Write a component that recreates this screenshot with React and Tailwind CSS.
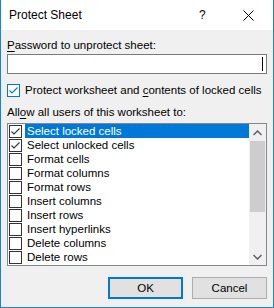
const items = [
  { label: 'Select locked cells', checked: true, selected: true },
  { label: 'Select unlocked cells', checked: true },
  { label: 'Format cells' },
  { label: 'Format columns' },
  { label: 'Format rows' },
  { label: 'Insert columns' },
  { label: 'Insert rows' },
  { label: 'Insert hyperlinks' },
  { label: 'Delete columns' },
  { label: 'Delete rows' },
];

function Check({ color }) {
  return (
    <svg width="11" height="11" viewBox="0 0 11 11" className="block">
      <polyline points="1.5,5.5 4,8 9.5,2.5" fill="none" stroke={color} strokeWidth="1.1" />
    </svg>
  );
}

export default function App() {
  return (
    <div
      className="w-[274px] h-[308px] flex flex-col bg-[#f0f0f0] border-x border-b border-[#1883d7] text-[11.5px] text-black leading-[15px] whitespace-nowrap"
      style={{ fontFamily: '"Liberation Sans", Arial, sans-serif' }}
    >
      {/* title bar */}
      <div className="h-[30px] bg-white flex items-center pl-[8px] text-[12px]">
        <span className="flex-1">Protect Sheet</span>
        <span className="w-[8px] mr-[36px]">?</span>
        <svg width="11" height="11" viewBox="0 0 11 11" className="mr-[19px]">
          <path d="M0.5 0.5 L10.5 10.5 M10.5 0.5 L0.5 10.5" stroke="#000" strokeWidth="1" />
        </svg>
      </div>

      <div className="flex flex-col px-[6px]">
        <div className="mt-[8px]">
          <span className="underline underline-offset-2">P</span>assword to unprotect sheet:
        </div>
        <div className="mt-[1px] h-[20px] bg-white border border-[#7a7a7a] flex items-center justify-end pr-[3px]">
          <div className="w-px h-[14px] bg-black" />
        </div>

        <div className="mt-[9px] flex items-center gap-[5px]">
          <div className="w-[13px] h-[13px] border border-[#0078d7] bg-white flex items-center justify-center shrink-0">
            <Check color="#0078d7" />
          </div>
          <span>
            Protect worksheet and <span className="underline underline-offset-2">c</span>ontents of locked cells
          </span>
        </div>

        <div className="mt-[7px]">
          All<span className="underline underline-offset-2">o</span>w all users of this worksheet to:
        </div>

        <div className="mt-[3px] h-[143px] bg-white border border-[#828790] flex">
          <div className="flex-1 flex flex-col pl-[1px]">
            {items.map((it) => (
              <div key={it.label} className="h-[14px] flex items-center">
                <div className="w-[13px] h-[13px] border border-[#333] bg-white flex items-center justify-center shrink-0">
                  {it.checked && <Check color="#333" />}
                </div>
                <div
                  className={
                    'ml-[3px] h-[14px] flex-1 flex items-center pl-[2px] ' +
                    (it.selected ? 'bg-[#0078d7] text-white' : '')
                  }
                >
                  {it.label}
                </div>
              </div>
            ))}
          </div>
          <div className="w-[17px] bg-[#f0f0f0] flex flex-col items-center">
            <div className="h-[17px] flex items-center justify-center">
              <svg width="9" height="6" viewBox="0 0 9 6">
                <polyline points="0.5,5 4.5,1 8.5,5" fill="none" stroke="#606060" strokeWidth="1.5" />
              </svg>
            </div>
            <div className="w-[15px] h-[71px] bg-[#cdcdcd]" />
            <div className="flex-1" />
            <div className="h-[17px] flex items-center justify-center">
              <svg width="9" height="6" viewBox="0 0 9 6">
                <polyline points="0.5,1 4.5,5 8.5,1" fill="none" stroke="#606060" strokeWidth="1.5" />
              </svg>
            </div>
          </div>
        </div>

        <div className="mt-[11px] flex justify-end gap-[9px]">
          <button className="w-[75px] h-[22px] bg-[#e1e1e1] border-2 border-[#0078d7] flex items-center justify-center">
            OK
          </button>
          <button className="w-[75px] h-[22px] bg-[#e1e1e1] border border-[#adadad] flex items-center justify-center">
            Cancel
          </button>
        </div>
      </div>
    </div>
  );
}
